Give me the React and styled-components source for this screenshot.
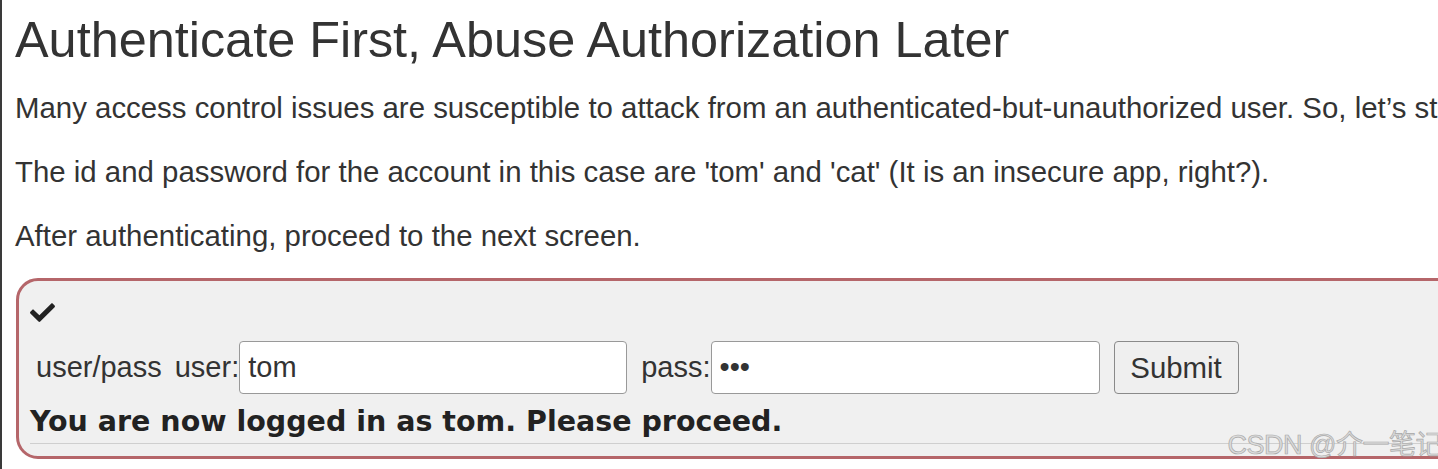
import styled, { createGlobalStyle } from "styled-components";

const GlobalStyle = createGlobalStyle`
  html, body {
    margin: 0;
    padding: 0;
    background: #ffffff;
    overflow: hidden;
  }
  body {
    font-family: "Liberation Sans", Arial, sans-serif;
    color: #333;
  }
`;

const Page = styled.div`
  position: relative;
  width: 1438px;
  height: 469px;
  overflow: hidden;
  border-left: 2px solid #3a3a3a;
  box-sizing: border-box;
`;

const Content = styled.div`
  width: 2200px;
  padding: 0 0 0 13px;
`;

const Title = styled.h2`
  font-size: 50.4px;
  font-weight: 400;
  line-height: 51px;
  margin: 14px 0 25px;
  color: #333;
`;

const Para = styled.p`
  font-size: 29.4px;
  line-height: 35px;
  margin: 0 0 29px;
  white-space: nowrap;
  &:last-of-type {
    margin-bottom: 25px;
  }
`;

const LessonBox = styled.div`
  width: 1500px;
  margin-left: 1px;
  border: 3px solid #b5666a;
  border-radius: 22px;
  background: #f0f0f0;
  padding: 21px 0 12px 11px;
  box-sizing: border-box;
`;

const Check = styled.svg`
  display: block;
  width: 25px;
  height: 20px;
  fill: #222;
  margin-bottom: 19px;
`;

const FormRow = styled.form`
  display: flex;
  align-items: center;
  font-size: 29px;
  margin-left: 6px;
`;

const Label = styled.span`
  margin-right: ${(p) => p.$gap || 0}px;
  margin-left: ${(p) => p.$lead || 0}px;
`;

const Input = styled.input`
  box-sizing: border-box;
  width: ${(p) => p.$w}px;
  height: 53px;
  border: 1px solid #999;
  border-radius: 4px;
  background: #fff;
  font-family: "Liberation Sans", Arial, sans-serif;
  font-size: 29px;
  color: #333;
  padding: 0 8px;
  &:focus { outline: none; }
`;

const SubmitButton = styled.button`
  box-sizing: border-box;
  height: 53px;
  width: 125px;
  padding: 0;
  margin-left: 14px;
  border: 1px solid #8a8a8a;
  border-radius: 4px;
  background: #efefef;
  font-family: "Liberation Sans", Arial, sans-serif;
  font-size: 29.4px;
  color: #333;
`;

const Feedback = styled.div`
  font-family: "DejaVu Sans", Verdana, sans-serif;
  font-size: 28.5px;
  line-height: 32px;
  font-weight: 700;
  color: #222;
  margin-top: 12px;
  padding-bottom: 5px;
  border-bottom: 1px solid #cfcfcf;
`;

const Watermark = styled.div`
  position: absolute;
  right: -4px;
  bottom: 9px;
  font-family: "Liberation Sans", "Noto Sans CJK SC", sans-serif;
  font-size: 27px;
  line-height: 30px;
  color: #dcdcdc;
  -webkit-text-stroke: 0.7px #a8a8a8;
  letter-spacing: -0.5px;
`;

export default function App() {
  return (
    <Page>
      <GlobalStyle />
      <Content>
        <Title>Authenticate First, Abuse Authorization Later</Title>
        <Para>
          Many access control issues are susceptible to attack from an authenticated-but-unauthorized user. So, let’s start by authenticating first.
        </Para>
        <Para>
          The id and password for the account in this case are 'tom' and 'cat' (It is an insecure app, right?).
        </Para>
        <Para>After authenticating, proceed to the next screen.</Para>
        <LessonBox>
          <Check viewBox="0 0 512 410">
            <path d="M173.9 400.3L7.5 233.9c-10-10-10-26.2 0-36.2l36.2-36.2c10-10 26.2-10 36.2 0L192 273.6 432.1 33.5c10-10 26.2-10 36.2 0l36.2 36.2c10 10 10 26.2 0 36.2L210.1 400.3c-10 10-26.2 10-36.2 0z" />
          </Check>
          <FormRow onSubmit={(e) => e.preventDefault()}>
            <Label $gap={13}>user/pass</Label>
            <Label>user:</Label>
            <Input $w={388} name="username" defaultValue="tom" />
            <Label $lead={14}>pass:</Label>
            <Input $w={389} name="password" type="password" defaultValue="cat" />
            <SubmitButton type="submit">Submit</SubmitButton>
          </FormRow>
          <Feedback>You are now logged in as tom. Please proceed.</Feedback>
        </LessonBox>
      </Content>
      <Watermark>CSDN @介一笔记</Watermark>
    </Page>
  );
}
